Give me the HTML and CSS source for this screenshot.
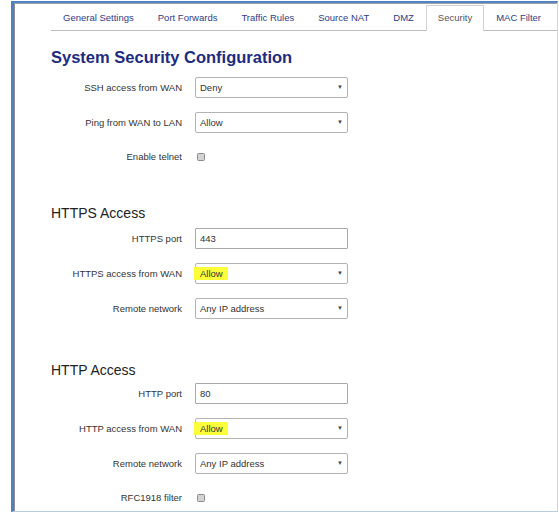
FILE: index.html
```html
<!DOCTYPE html>
<html lang="en">
<head>
<meta charset="utf-8">
<title>Firewall - Security</title>
<link rel="stylesheet" href="styles.css">
</head>
<body>
<div class="window">
  <div class="pane">
    <ul class="tabs">
      <li class="tab">General Settings</li>
      <li class="tab">Port Forwards</li>
      <li class="tab">Traffic Rules</li>
      <li class="tab">Source NAT</li>
      <li class="tab">DMZ</li>
      <li class="tab active">Security</li>
      <li class="tab">MAC Filter</li>
    </ul>

    <div class="content">
      <h1 class="page-title">System Security Configuration</h1>

      <div class="fields first">
        <div class="field">
          <label class="label">SSH access from WAN</label>
          <div class="select"><span class="value">Deny</span><span class="caret">&#9660;</span></div>
        </div>
        <div class="field">
          <label class="label">Ping from WAN to LAN</label>
          <div class="select"><span class="value">Allow</span><span class="caret">&#9660;</span></div>
        </div>
        <div class="field check">
          <label class="label">Enable telnet</label>
          <span class="checkbox"></span>
        </div>
      </div>

      <h2 class="section-title https">HTTPS Access</h2>
      <div class="fields after-https">
        <div class="field">
          <label class="label">HTTPS port</label>
          <div class="input">443</div>
        </div>
        <div class="field">
          <label class="label">HTTPS access from WAN</label>
          <div class="select"><span class="value marked">Allow</span><span class="caret">&#9660;</span></div>
        </div>
        <div class="field">
          <label class="label">Remote network</label>
          <div class="select"><span class="value">Any IP address</span><span class="caret">&#9660;</span></div>
        </div>
      </div>

      <h2 class="section-title http">HTTP Access</h2>
      <div class="fields after-http">
        <div class="field">
          <label class="label">HTTP port</label>
          <div class="input">80</div>
        </div>
        <div class="field">
          <label class="label">HTTP access from WAN</label>
          <div class="select"><span class="value marked">Allow</span><span class="caret">&#9660;</span></div>
        </div>
        <div class="field">
          <label class="label">Remote network</label>
          <div class="select"><span class="value">Any IP address</span><span class="caret">&#9660;</span></div>
        </div>
        <div class="field check">
          <label class="label">RFC1918 filter</label>
          <span class="checkbox"></span>
        </div>
      </div>
    </div>
  </div>
</div>
</body>
</html>
```

FILE: styles.css
```css
* {
  box-sizing: border-box;
}

html, body {
  margin: 0;
  padding: 0;
  background: #ffffff;
}

body {
  font-family: "Liberation Sans", Arial, sans-serif;
  font-size: 9.5px;
  color: #333333;
  overflow: hidden;
}

/* outer window frame */
.window {
  margin: 1px 1px 0 11px;
  height: 511px;
  border-top: 2px solid #5283c4;
  border-left: 3px solid #4f80c2;
  border-right: 1px solid #cad9ea;
  border-bottom: 1px solid #b9cce2;
  overflow: hidden;
}

.pane {
  height: 100%;
  border-top: 1px solid #a3a3a3;
  border-left: 1px solid #8e8e8e;
  background: #ffffff;
}

/* tab strip */
.tabs {
  list-style: none;
  display: flex;
  margin: 1px 0 0 36px;
  padding: 0;
  height: 26px;
  border-bottom: 1px solid #bdbdbd;
}

.tab {
  padding: 0 12px;
  height: 25px;
  line-height: 25px;
  color: #2f3c85;
  white-space: nowrap;
}

.tab.active {
  padding: 0 11px;
  height: 26px;
  border: 1px solid #d2d2d2;
  border-bottom: none;
  background: #ffffff;
  line-height: 24px;
  color: #555555;
}

.content {
  padding-left: 36px;
}

.page-title {
  margin: 17px 0 0 0;
  font-size: 16.5px;
  line-height: 19px;
  font-weight: bold;
  color: #1d2c7e;
}

.section-title {
  margin: 0;
  font-size: 14px;
  line-height: 16px;
  font-weight: normal;
  color: #222222;
}

.section-title.https {
  margin-top: 39px;
}

.section-title.http {
  margin-top: 43px;
}

/* form rows */
.fields {
  display: flex;
  flex-direction: column;
  gap: 14px;
}

.fields.first {
  margin-top: 10px;
}

.fields.after-https {
  margin-top: 7px;
}

.fields.after-http {
  margin-top: 5px;
}

.field {
  display: grid;
  grid-template-columns: 131px 153px;
  column-gap: 13px;
  align-items: center;
  height: 21px;
}

.field.check {
  height: 19px;
}

.label {
  text-align: right;
  color: #333333;
  white-space: nowrap;
}

.select,
.input {
  position: relative;
  display: flex;
  align-items: center;
  height: 21px;
  padding-left: 4px;
  border: 1px solid #b3b3b3;
  border-radius: 2px;
  background: #ffffff;
  color: #333333;
}

.input {
  border-color: #a9a9a9;
  border-radius: 1px;
}

.value {
  white-space: nowrap;
}

/* highlighter mark drawn over the chosen option */
.value.marked {
  margin-left: -6px;
  padding: 1px 5px 1px 6px;
  background: #fbff3a;
}

.caret {
  position: absolute;
  right: 4px;
  top: 6px;
  font-size: 6px;
  color: #444444;
}

.checkbox {
  display: block;
  width: 8px;
  height: 8px;
  margin-left: 2px;
  border: 1px solid #8b8b8b;
  border-radius: 1.5px;
  background: #d3d3d3;
}
```
